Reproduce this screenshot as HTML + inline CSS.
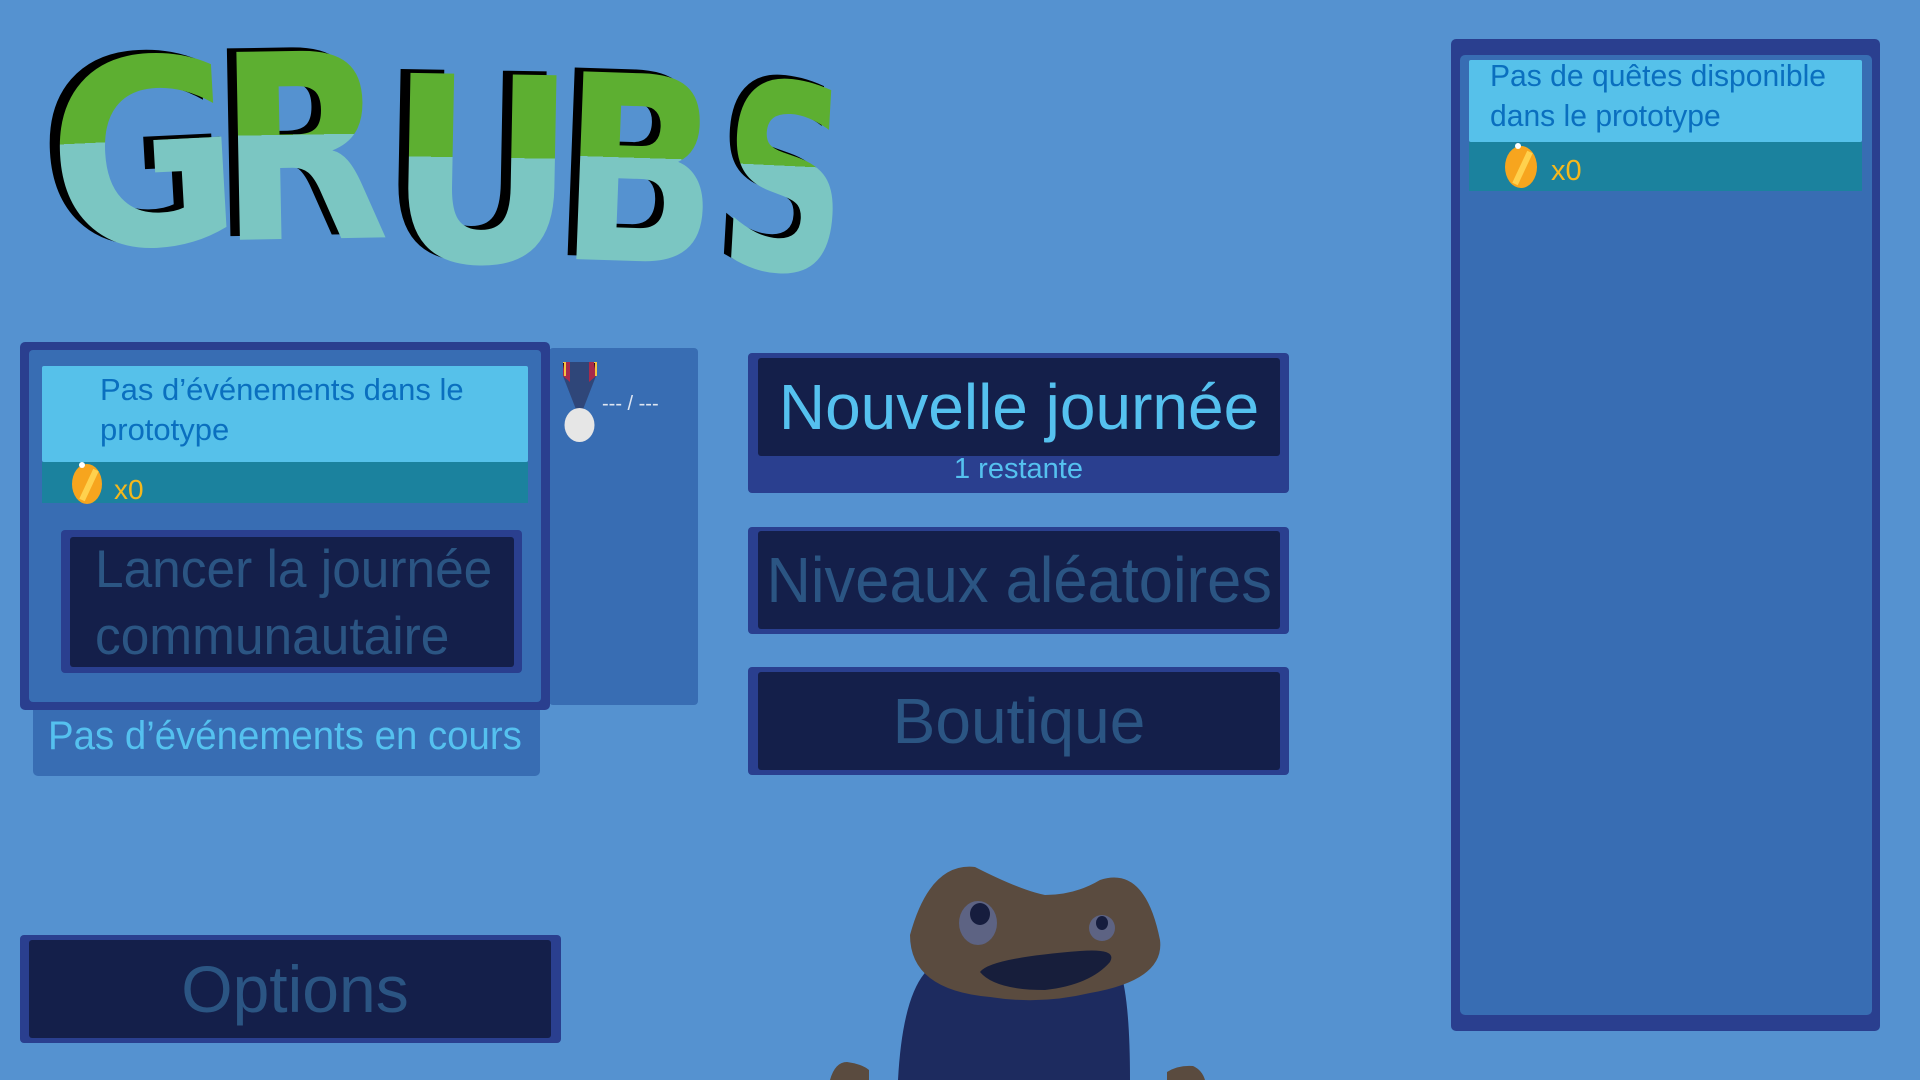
<!DOCTYPE html>
<html><head><meta charset="utf-8"><style>
*{margin:0;padding:0;box-sizing:border-box}
body{width:1920px;height:1080px;background:#5592d0;position:relative;overflow:hidden;font-family:"Liberation Sans",sans-serif}
.a{position:absolute}
.btn{position:absolute;background:#2a3f8f;border-radius:4px}
.dark{position:absolute;background:#141f4a;border-radius:3px;display:flex;align-items:center;justify-content:center}
.t{position:absolute;white-space:nowrap;transform-origin:left top}
.c{white-space:nowrap;display:inline-block}
</style></head><body>

<svg class="a" style="left:0;top:0" width="900" height="290" viewBox="0 0 900 290">
<defs>
<linearGradient id="g" x1="0" y1="0" x2="0" y2="1">
<stop offset="0" stop-color="#5daf31"/><stop offset="0.45" stop-color="#5daf31"/><stop offset="0.45" stop-color="#7bc6c2"/><stop offset="1" stop-color="#7bc6c2"/></linearGradient>
</defs>
<g transform="translate(0,22) scale(1,0.92)">
<g font-family="DejaVu Sans" font-weight="bold" font-size="280">
<g transform="translate(52,243) rotate(-3) scale(0.83,1)"><text x="-10" y="0" fill="#000">G</text><text x="2" y="4" fill="url(#g)">G</text></g>
<g transform="translate(218,233) rotate(-1) scale(0.79,1)"><text x="-10" y="0" fill="#000">R</text><text x="2" y="4" fill="url(#g)">R</text></g>
<g transform="translate(384,255) rotate(1) scale(0.83,1)"><text x="-10" y="0" fill="#000">U</text><text x="2" y="4" fill="url(#g)">U</text></g>
<g transform="translate(556,253) rotate(2) scale(0.74,1)"><text x="-10" y="0" fill="#000">B</text><text x="2" y="4" fill="url(#g)">B</text></g>
<g transform="translate(716,262) rotate(3) scale(0.62,1)"><text x="-10" y="0" fill="#000">S</text><text x="2" y="4" fill="url(#g)">S</text></g>
</g>
</g>
</svg>

<!-- left panel -->
<div class="a" style="left:549px;top:348px;width:149px;height:357px;background:#386db3;border-radius:4px"></div>
<div class="a" style="left:20px;top:342px;width:530px;height:368px;background:#2a3f8f;border-radius:5px"></div>
<div class="a" style="left:29px;top:350px;width:512px;height:352px;background:#386db3;border-radius:4px"></div>
<div class="a" style="left:42px;top:366px;width:486px;height:96px;background:#56c1ea;border-radius:2px"></div>
<div class="a" style="left:42px;top:462px;width:486px;height:41px;background:#1b829e"></div>
<div class="t" style="left:100px;top:370px;font-size:31px;line-height:40px;color:#0a6fbf">Pas d’événements dans le<br>prototype</div>
<svg class="a" style="left:68px;top:460px" width="40" height="46"><ellipse cx="19" cy="24" rx="15" ry="20" fill="#f7a51e"/><path d="M14 40 L28 10" stroke="#ffd14d" stroke-width="6"/><circle cx="14" cy="5" r="3" fill="#fff"/></svg>
<div class="t" style="left:114px;top:474px;font-size:28px;color:#f5b81c">x0</div>

<svg class="a" style="left:560px;top:362px" width="40" height="82"><path d="M3 0 H36 V14 L22 50 H17 L3 14 Z" fill="#2f4679"/><path d="M3 0 H10 V20 L3 14Z M29 0 H36 V14 L29 20Z" fill="#a82a4b"/><path d="M3 0 H5 V14 M34 0 H36 V14" stroke="#f5c342" stroke-width="2"/><ellipse cx="19.5" cy="63" rx="15" ry="17" fill="#e6e6e6"/></svg>
<div class="t" style="left:602px;top:393px;font-size:20px;color:#dfe6f2">--- / ---</div>

<div class="btn" style="left:61px;top:530px;width:461px;height:143px"></div>
<div class="dark" style="left:70px;top:537px;width:444px;height:130px"></div>
<div class="t" style="left:95px;top:536px;font-size:53px;line-height:67px;color:#2b5583;transform:scaleX(0.97)">Lancer la journée<br>communautaire</div>

<div class="a" style="left:33px;top:710px;width:507px;height:66px;background:#386db3;border-radius:0 0 5px 5px"></div>
<div class="t" style="left:48px;top:714px;font-size:40px;color:#55c1ef;transform:scaleX(0.96)">Pas d’événements en cours</div>

<div class="btn" style="left:20px;top:935px;width:541px;height:108px"></div>
<div class="dark" style="left:29px;top:940px;width:522px;height:98px"><span class="c" style="font-size:66px;color:#2b5583;margin-left:10px">Options</span></div>

<!-- center buttons -->
<div class="btn" style="left:748px;top:353px;width:541px;height:140px"></div>
<div class="dark" style="left:758px;top:358px;width:522px;height:98px"><span class="c" style="font-size:64px;color:#55c1ef">Nouvelle journée</span></div>
<div class="t" style="left:748px;width:541px;text-align:center;top:453px;font-size:29px;color:#55c1ef">1 restante</div>

<div class="btn" style="left:748px;top:527px;width:541px;height:107px"></div>
<div class="dark" style="left:758px;top:531px;width:522px;height:98px"><span class="c" style="font-size:64px;color:#2b5583;transform:scaleX(0.96)">Niveaux aléatoires</span></div>

<div class="btn" style="left:748px;top:667px;width:541px;height:108px"></div>
<div class="dark" style="left:758px;top:672px;width:522px;height:98px"><span class="c" style="font-size:64px;color:#2b5583">Boutique</span></div>

<!-- right panel -->
<div class="a" style="left:1451px;top:39px;width:429px;height:992px;background:#2a3f8f;border-radius:5px"></div>
<div class="a" style="left:1460px;top:55px;width:412px;height:960px;background:#386db3;border-radius:5px"></div>
<div class="a" style="left:1469px;top:60px;width:393px;height:82px;background:#56c1ea;border-radius:2px"></div>
<div class="a" style="left:1469px;top:142px;width:393px;height:49px;background:#1b829e"></div>
<div class="t" style="left:1490px;top:56px;font-size:31px;line-height:40px;color:#0a6fbf;transform:scaleX(0.97)">Pas de quêtes disponible<br>dans le prototype</div>
<svg class="a" style="left:1502px;top:142px" width="40" height="48"><ellipse cx="19" cy="25" rx="16" ry="21" fill="#f7a51e"/><path d="M13 42 L28 10" stroke="#ffd14d" stroke-width="6"/><circle cx="16" cy="4" r="3" fill="#fff"/></svg>
<div class="t" style="left:1551px;top:155px;font-size:29px;color:#f5b81c">x0</div>

<!-- character -->
<svg class="a" style="left:800px;top:840px" width="450" height="240">
<path d="M98 240 Q105 110 160 120 L320 130 Q330 160 330 240 Z" fill="#1d2b5f"/>
<path d="M110 95 Q130 22 175 27 Q220 50 245 55 Q275 55 300 40 Q345 25 360 100 Q365 140 290 153 Q240 165 190 157 Q110 150 110 95 Z" fill="#5a4b3f"/>
<ellipse cx="178" cy="83" rx="19" ry="22" fill="#5d6383"/><ellipse cx="180" cy="74" rx="10" ry="11" fill="#161d3e"/>
<ellipse cx="302" cy="88" rx="13" ry="13" fill="#5d6383"/><ellipse cx="302" cy="83" rx="6" ry="7" fill="#161d3e"/>
<path d="M180 132 Q190 118 280 111 Q318 108 310 122 Q290 145 245 150 Q195 150 180 132 Z" fill="#171e3b"/>
<path d="M30 240 Q35 222 47 222 Q62 224 69 230 L69 240 Z" fill="#5a4b3f"/>
<path d="M367 240 L367 232 Q378 225 393 226 Q402 230 405 240 Z" fill="#5a4b3f"/>
</svg>
</body></html>
